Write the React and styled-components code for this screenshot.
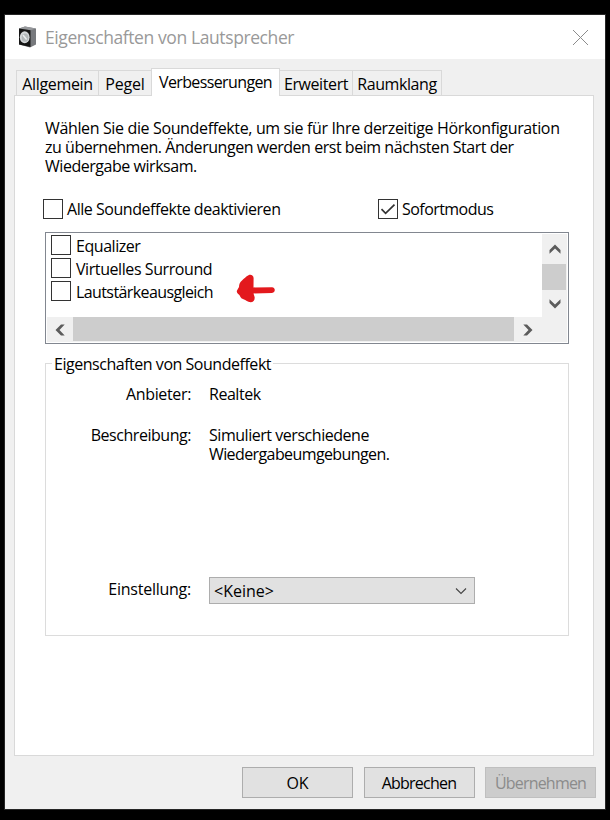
import React from "react";
import styled, { createGlobalStyle } from "styled-components";

const GlobalStyle = createGlobalStyle`
  * {
    box-sizing: border-box;
  }

  body {
    margin: 0;
    background: #000;
    font-family: "Open Sans", "Noto Sans", sans-serif;
    font-size: 16px;
    color: #000;
  }
`;

const Desktop = styled.div`
  width: 610px;
  height: 820px;
  padding: 14px 4px 10px;
  background: #000;
  overflow: hidden;
`;

const Window = styled.div`
  width: 602px;
  height: 796px;
  border: 1px solid #262626;
  background: #f0f0f0;
`;

const TitleBar = styled.div`
  display: flex;
  align-items: center;
  height: 44px;
  padding: 0 17px 0 13px;
  background: #fff;
`;

const Title = styled.h1`
  flex: 1;
  margin: 0 0 0 8px;
  font-size: 17.5px;
  font-weight: 400;
  line-height: 24px;
  letter-spacing: -0.4px;
  color: #999;
`;

const Text = styled.span`
  line-height: 19px;
  white-space: nowrap;
  letter-spacing: ${({ $track }) => $track ?? -0.46}px;
`;

const Tabs = styled.div`
  display: flex;
  align-items: flex-end;
  height: 36px;
  padding-left: 11px;
`;

const Tab = styled.div`
  display: flex;
  justify-content: center;
  width: ${({ $width }) => $width}px;
  height: ${({ $active }) => ($active ? 28 : 25)}px;
  margin-bottom: ${({ $active }) => ($active ? -1 : 0)}px;
  margin-left: ${({ $active }) => ($active ? -1 : 0)}px;
  padding-top: 4px;
  border: 1px solid #d9d9d9;
  border-bottom: 0;
  border-left-width: ${({ $joined }) => ($joined ? 0 : 1)}px;
  background: ${({ $active }) => ($active ? "#fff" : "#f0f0f0")};
`;

const Panel = styled.div`
  width: 580px;
  height: 661px;
  margin-left: 9px;
  padding: 23px 24px 0 30px;
  border: 1px solid #d9d9d9;
  background: #fff;
`;

const Intro = styled.div`
  display: flex;
  flex-direction: column;
`;

const Options = styled.div`
  display: flex;
  margin: 23px 0 0 -2px;
`;

const Option = styled.label`
  display: flex;
  align-items: center;
  gap: 4px;
  width: ${({ $width }) => ($width ? `${$width}px` : "auto")};
  height: 20px;
`;

const Box = styled.span`
  display: flex;
  flex: none;
  width: 20px;
  height: 20px;
  border: 1px solid #333;
  background: #fff;
`;

const EffectList = styled.div`
  display: grid;
  grid-template-columns: 1fr 25px;
  grid-template-rows: 83px 25px;
  position: relative;
  width: 524px;
  height: 112px;
  margin-top: 13px;
  padding: 1px;
  border: 1px solid #828790;
`;

const Effects = styled.div`
  display: flex;
  flex-direction: column;
  gap: 3px;
  padding: 1px 0 0 4px;

  ${Option} {
    gap: 5px;
  }

  ${Text} {
    padding-top: 2px;
  }
`;

const ScrollBar = styled.div`
  display: flex;
  flex-direction: ${({ $vertical }) => ($vertical ? "column" : "row")};
  background: #f0f0f0;
`;

const ScrollButton = styled.div`
  display: flex;
  align-items: center;
  justify-content: center;
  width: ${({ $width }) => $width}px;
  height: ${({ $height }) => $height}px;
`;

const Thumb = styled.div`
  width: ${({ $width }) => $width}px;
  height: ${({ $height }) => $height}px;
  background: #cdcdcd;
`;

const Corner = styled.div`
  background: #f0f0f0;
`;

const Marker = styled.svg`
  position: absolute;
  left: 190px;
  top: 41px;
`;

const Group = styled.fieldset`
  width: 524px;
  height: 282px;
  margin: 10px 0 0;
  padding: 13px 0 0;
  border: 1px solid #dcdcdc;
`;

const Legend = styled.legend`
  display: flex;
  height: 18px;
  margin-left: 6px;
  padding: 1px 2px 0;
`;

const Field = styled.div`
  display: flex;
  align-items: flex-start;
  gap: 18px;
  height: ${({ $height }) => $height}px;
`;

const Label = styled.div`
  display: flex;
  justify-content: flex-end;
  width: 145px;
`;

const Value = styled.div`
  display: flex;
  flex-direction: column;
`;

const Select = styled.div`
  display: flex;
  align-items: center;
  justify-content: space-between;
  width: 266px;
  height: 27px;
  margin-top: -3px;
  padding: 1px 7px 0 4px;
  border: 1px solid #adadad;
  background: #e1e1e1;
`;

const Footer = styled.div`
  display: flex;
  justify-content: space-between;
  width: 354px;
  margin-left: auto;
  margin-right: 9px;
  padding-top: 11px;
`;

const Button = styled.button`
  display: flex;
  align-items: center;
  justify-content: center;
  width: 111px;
  height: 31px;
  padding: 1px 0 0;
  border: 1px solid ${({ disabled }) => (disabled ? "#bfbfbf" : "#adadad")};
  background: ${({ disabled }) => (disabled ? "#ccc" : "#e1e1e1")};
  color: ${({ disabled }) => (disabled ? "#8b8b8b" : "#000")};
  font: inherit;
`;

const tabs = [
  { name: "Allgemein", width: 83, track: -0.35 },
  { name: "Pegel", width: 53, track: -0.2 },
  { name: "Verbesserungen", width: 129, track: -0.62, active: true },
  { name: "Erweitert", width: 73, track: -0.4 },
  { name: "Raumklang", width: 89, track: -0.4 },
];

const effects = [
  { name: "Equalizer", track: -0.45 },
  { name: "Virtuelles Surround", track: -0.42 },
  { name: "Lautstärkeausgleich", track: -0.6 },
];

const SpeakerIcon = () => (
  <svg width="19" height="22" viewBox="0 0 19 22">
    <path d="M1 2.5 L7 0.5 L18 2.5 L18 18.5 L12 21.5 L1 18.5Z" fill="#77797d" />
    <path d="M1 2.5 L7 0.5 L18 2.5 L12.5 4.2Z" fill="#96989b" />
    <path d="M1 2.5 L12.5 4.2 L12.5 21 L1 18.5Z" fill="#141414" />
    <ellipse cx="6.7" cy="11.3" rx="4.9" ry="6" fill="#d3d6d8" />
    <ellipse cx="7" cy="11.6" rx="3.3" ry="4.2" fill="#b3b8ba" />
    <path d="M5 9 L8.6 13.5" stroke="#eceeef" strokeWidth="1.4" />
  </svg>
);

const CloseIcon = () => (
  <svg width="15" height="15" viewBox="0 0 15 15">
    <path d="M0 0 L15 15 M15 0 L0 15" stroke="#8c8c8c" strokeWidth="1" />
  </svg>
);

const CheckIcon = () => (
  <svg width="18" height="18" viewBox="0 0 18 18">
    <path d="M2.5 9.2 L6.6 13.3 L15.5 4.6" fill="none" stroke="#333" strokeWidth="1.7" />
  </svg>
);

const Arrow = ({ angle }) => (
  <svg width="12" height="12" viewBox="0 0 12 12">
    <path
      d="M6 1.5 L11.5 7 V10.7 L6 5.5 L0.5 10.7 V7Z"
      fill="#5c5c5c"
      transform={`rotate(${angle} 6 6)`}
    />
  </svg>
);

const Check = ({ label, checked, track, width }) => (
  <Option $width={width}>
    <Box>{checked && <CheckIcon />}</Box>
    <Text $track={track}>{label}</Text>
  </Option>
);

const App = () => {
  return (
    <Desktop>
      <GlobalStyle />
      <Window>
        <TitleBar>
          <SpeakerIcon />
          <Title>Eigenschaften von Lautsprecher</Title>
          <CloseIcon />
        </TitleBar>

        <Tabs>
          {tabs.map((tab, i) => (
            <Tab key={tab.name} $width={tab.width} $active={tab.active} $joined={i > 0 && !tab.active}>
              <Text $track={tab.track}>{tab.name}</Text>
            </Tab>
          ))}
        </Tabs>

        <Panel>
          <Intro>
            <Text $track={-0.36}>Wählen Sie die Soundeffekte, um sie für Ihre derzeitige Hörkonfiguration</Text>
            <Text>zu übernehmen. Änderungen werden erst beim nächsten Start der</Text>
            <Text>Wiedergabe wirksam.</Text>
          </Intro>

          <Options>
            <Check label="Alle Soundeffekte deaktivieren" width={335} />
            <Check label="Sofortmodus" checked track={-0.55} />
          </Options>

          <EffectList>
            <Effects>
              {effects.map((effect) => (
                <Check key={effect.name} label={effect.name} track={effect.track} />
              ))}
            </Effects>
            <ScrollBar $vertical>
              <ScrollButton $width={25} $height={30}>
                <Arrow angle={0} />
              </ScrollButton>
              <Thumb $width={24} $height={26} />
              <ScrollButton $width={25} $height={27}>
                <Arrow angle={180} />
              </ScrollButton>
            </ScrollBar>
            <ScrollBar>
              <ScrollButton $width={26} $height={25}>
                <Arrow angle={-90} />
              </ScrollButton>
              <Thumb $width={441} $height={24} />
              <ScrollButton $width={27} $height={25}>
                <Arrow angle={90} />
              </ScrollButton>
            </ScrollBar>
            <Corner />
            {/* Red hand-drawn pointer at the last effect */}
            <Marker width="42" height="32" viewBox="0 0 42 32">
              <path
                d="M1 16.5 L3 13 C3 10 4 8 6 6.5 C8 4.5 10 2.5 12.5 1.2 C15 0 17.8 1.5 17.6 4.5 L17.5 13.4 L36 13.2 C39.8 13.6 39.6 18.6 36 19 L17.5 19.4 L18.6 23 C19 26 17.5 28 14.5 28.2 C11.5 28 10 26 7.5 25.2 C4.5 24.5 4.5 22 2.8 20.5 C1.2 19.3 0.4 18 1 16.5Z"
                fill="#e3191d"
              />
            </Marker>
          </EffectList>

          <Group>
            <Legend>
              <Text $track={-0.47}>Eigenschaften von Soundeffekt</Text>
            </Legend>
            <Field $height={41}>
              <Label>
                <Text $track={-0.35}>Anbieter:</Text>
              </Label>
              <Text>Realtek</Text>
            </Field>
            <Field $height={154}>
              <Label>
                <Text>Beschreibung:</Text>
              </Label>
              <Value>
                <Text>Simuliert verschiedene</Text>
                <Text $track={-0.6}>Wiedergabeumgebungen.</Text>
              </Value>
            </Field>
            <Field $height={30}>
              <Label>
                <Text $track={-0.25}>Einstellung:</Text>
              </Label>
              <Select>
                <Text $track={0}>&lt;Keine&gt;</Text>
                <svg width="12" height="8" viewBox="0 0 12 8">
                  <path d="M1 1.5 L6 6.5 L11 1.5" fill="none" stroke="#444" strokeWidth="1.1" />
                </svg>
              </Select>
            </Field>
          </Group>
        </Panel>

        <Footer>
          <Button>
            <Text $track={0}>OK</Text>
          </Button>
          <Button>
            <Text $track={-0.75}>Abbrechen</Text>
          </Button>
          <Button disabled>
            <Text $track={-0.8}>Übernehmen</Text>
          </Button>
        </Footer>
      </Window>
    </Desktop>
  );
};

export default App;
